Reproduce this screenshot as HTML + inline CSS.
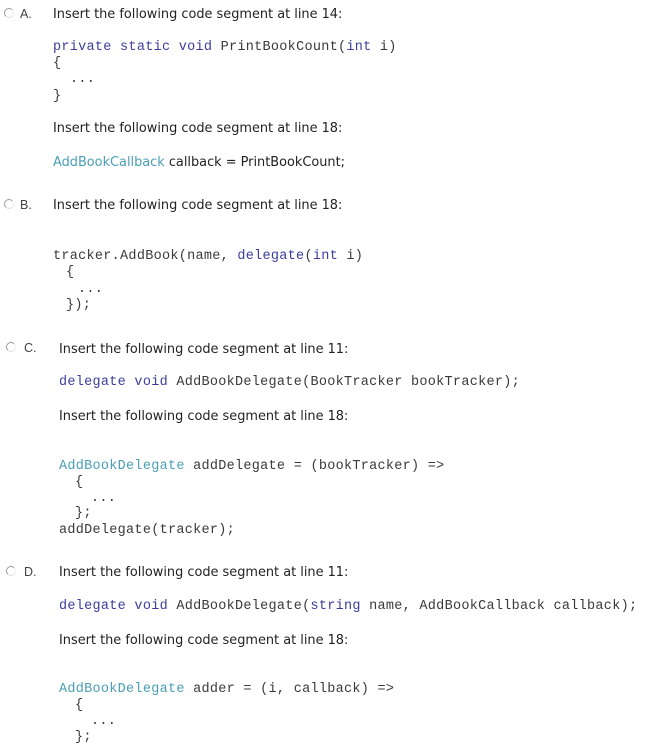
<!DOCTYPE html>
<html><head><meta charset="utf-8"><style>
body{margin:0;width:645px;height:744px;background:#fff;position:relative;overflow:hidden}
div{position:absolute;white-space:pre;line-height:16px}
.t{font-family:"DejaVu Sans","Liberation Sans",sans-serif;font-size:12.9px;color:#222}
.c{font-family:"Liberation Mono",monospace;font-size:13.5px;letter-spacing:0.28px;color:#3a3a3a}
.k{color:#3d3d9e}.ty{color:#4a9fb5}
.l{font-family:"Liberation Sans",sans-serif;font-size:12.5px;color:#444}
.r{width:8px;height:8px;border-radius:50%;border:1px solid #999;border-right-color:#eee;border-bottom-color:#ddd}
</style></head><body>
<div class="r" style="left:4px;top:8px"></div><div class="l" style="left:20px;top:6px">A.</div>
<div class="t" style="left:53px;top:7px">Insert the following code segment at line 14:</div>
<div class="c" style="left:53px;top:40px"><span class="k">private static void</span> PrintBookCount(<span class="k">int</span> i)</div>
<div class="c" style="left:53px;top:56px">{</div>
<div class="c" style="left:70px;top:72px">...</div>
<div class="c" style="left:53px;top:89px">}</div>
<div class="t" style="left:53px;top:121px">Insert the following code segment at line 18:</div>
<div class="t" style="left:53px;top:155px"><span class="ty">AddBookCallback</span> callback = PrintBookCount;</div>

<div class="r" style="left:4px;top:199px"></div><div class="l" style="left:20px;top:197px">B.</div>
<div class="t" style="left:53px;top:198px">Insert the following code segment at line 18:</div>
<div class="c" style="left:53px;top:249px">tracker.AddBook(name, <span class="k">delegate</span>(<span class="k">int</span> i)</div>
<div class="c" style="left:66px;top:265px">{</div>
<div class="c" style="left:78px;top:282px">...</div>
<div class="c" style="left:66px;top:298px">});</div>

<div class="r" style="left:6px;top:342px"></div><div class="l" style="left:24px;top:340px">C.</div>
<div class="t" style="left:59px;top:342px">Insert the following code segment at line 11:</div>
<div class="c" style="left:59px;top:375px"><span class="k">delegate void</span> AddBookDelegate(BookTracker bookTracker);</div>
<div class="t" style="left:59px;top:409px">Insert the following code segment at line 18:</div>
<div class="c" style="left:59px;top:459px"><span class="ty">AddBookDelegate</span> addDelegate = (bookTracker) =&gt;</div>
<div class="c" style="left:75px;top:475px">{</div>
<div class="c" style="left:91px;top:491px">...</div>
<div class="c" style="left:75px;top:506px">};</div>
<div class="c" style="left:59px;top:523px">addDelegate(tracker);</div>

<div class="r" style="left:6px;top:566px"></div><div class="l" style="left:24px;top:564px">D.</div>
<div class="t" style="left:59px;top:565px">Insert the following code segment at line 11:</div>
<div class="c" style="left:59px;top:599px"><span class="k">delegate void</span> AddBookDelegate(<span class="k">string</span> name, AddBookCallback callback);</div>
<div class="t" style="left:59px;top:633px">Insert the following code segment at line 18:</div>
<div class="c" style="left:59px;top:682px"><span class="ty">AddBookDelegate</span> adder = (i, callback) =&gt;</div>
<div class="c" style="left:75px;top:698px">{</div>
<div class="c" style="left:91px;top:714px">...</div>
<div class="c" style="left:75px;top:730px">};</div>
</body></html>
